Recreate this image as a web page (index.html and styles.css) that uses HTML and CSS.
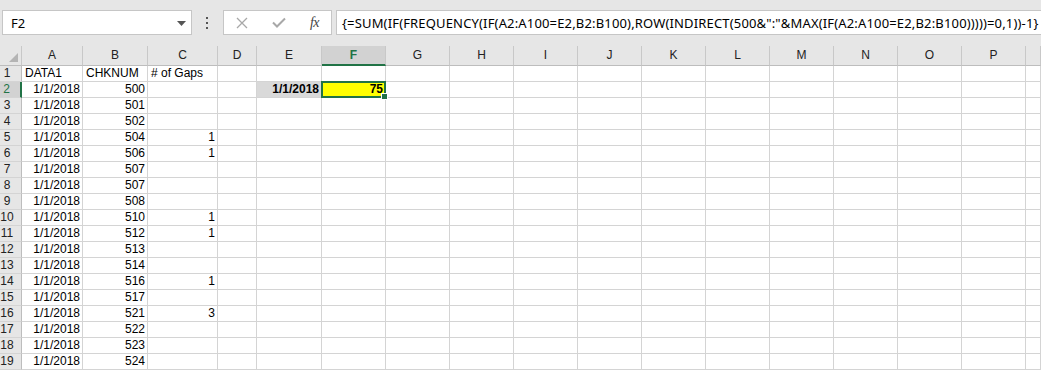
FILE: index.html
```html
<!DOCTYPE html>
<html>
<head>
<meta charset="utf-8">
<link rel="stylesheet" href="styles.css">
</head>
<body>
<div class="toolbar">
  <div class="namebox"><span>F2</span><svg class="caret" width="9" height="5" viewBox="0 0 9 5"><polygon points="0,0 9,0 4.5,5" fill="#555"/></svg></div>
  <div class="dots"><svg width="3" height="12" viewBox="0 0 3 12"><rect x="0" y="0" width="2" height="2" fill="#555"/><rect x="0" y="5" width="2" height="2" fill="#555"/><rect x="0" y="10" width="2" height="2" fill="#555"/></svg></div>
  <div class="fbtns">
    <svg width="12" height="12" viewBox="0 0 12 12"><path d="M1 1 L11 11 M11 1 L1 11" stroke="#a8a8a8" stroke-width="1.3" fill="none"/></svg>
    <svg width="14" height="11" viewBox="0 0 14 11"><path d="M1 5.5 L5 9.5 L13 1.5" stroke="#a8a8a8" stroke-width="2" fill="none"/></svg>
    <span class="fx">fx</span>
  </div>
  <div class="finput">{=SUM(IF(FREQUENCY(IF(A2:A100=E2,B2:B100),ROW(INDIRECT(500&amp;":"&amp;MAX(IF(A2:A100=E2,B2:B100)))))=0,1))-1}</div>
</div>
<div class="sheet">
  <span class="ch corner"><svg width="9" height="9" viewBox="0 0 9 9"><polygon points="9,0 9,9 0,9" fill="#b4b4b4"/></svg></span><span class="ch">A</span><span class="ch">B</span><span class="ch">C</span><span class="ch">D</span><span class="ch">E</span><span class="ch sel">F</span><span class="ch">G</span><span class="ch">H</span><span class="ch">I</span><span class="ch">J</span><span class="ch">K</span><span class="ch">L</span><span class="ch">M</span><span class="ch">N</span><span class="ch">O</span><span class="ch">P</span><span class="ch"></span>

  <span class="rh">1</span><span class="c">DATA1</span><span class="c">CHKNUM</span><span class="c"># of Gaps</span><span class="c"></span><span class="c"></span><span class="c"></span><span class="c"></span><span class="c"></span><span class="c"></span><span class="c"></span><span class="c"></span><span class="c"></span><span class="c"></span><span class="c"></span><span class="c"></span><span class="c"></span><span class="c"></span>

  <span class="rh sel">2</span><span class="c n">1/1/2018</span><span class="c n">500</span><span class="c"></span><span class="c"></span><span class="c n b grayfill">1/1/2018</span><span class="c n b yellow active">75</span><span class="c"></span><span class="c"></span><span class="c"></span><span class="c"></span><span class="c"></span><span class="c"></span><span class="c"></span><span class="c"></span><span class="c"></span><span class="c"></span><span class="c"></span>

  <span class="rh">3</span><span class="c n">1/1/2018</span><span class="c n">501</span><span class="c"></span><span class="c"></span><span class="c"></span><span class="c"></span><span class="c"></span><span class="c"></span><span class="c"></span><span class="c"></span><span class="c"></span><span class="c"></span><span class="c"></span><span class="c"></span><span class="c"></span><span class="c"></span><span class="c"></span>

  <span class="rh">4</span><span class="c n">1/1/2018</span><span class="c n">502</span><span class="c"></span><span class="c"></span><span class="c"></span><span class="c"></span><span class="c"></span><span class="c"></span><span class="c"></span><span class="c"></span><span class="c"></span><span class="c"></span><span class="c"></span><span class="c"></span><span class="c"></span><span class="c"></span><span class="c"></span>

  <span class="rh">5</span><span class="c n">1/1/2018</span><span class="c n">504</span><span class="c n">1</span><span class="c"></span><span class="c"></span><span class="c"></span><span class="c"></span><span class="c"></span><span class="c"></span><span class="c"></span><span class="c"></span><span class="c"></span><span class="c"></span><span class="c"></span><span class="c"></span><span class="c"></span><span class="c"></span>

  <span class="rh">6</span><span class="c n">1/1/2018</span><span class="c n">506</span><span class="c n">1</span><span class="c"></span><span class="c"></span><span class="c"></span><span class="c"></span><span class="c"></span><span class="c"></span><span class="c"></span><span class="c"></span><span class="c"></span><span class="c"></span><span class="c"></span><span class="c"></span><span class="c"></span><span class="c"></span>

  <span class="rh">7</span><span class="c n">1/1/2018</span><span class="c n">507</span><span class="c"></span><span class="c"></span><span class="c"></span><span class="c"></span><span class="c"></span><span class="c"></span><span class="c"></span><span class="c"></span><span class="c"></span><span class="c"></span><span class="c"></span><span class="c"></span><span class="c"></span><span class="c"></span><span class="c"></span>

  <span class="rh">8</span><span class="c n">1/1/2018</span><span class="c n">507</span><span class="c"></span><span class="c"></span><span class="c"></span><span class="c"></span><span class="c"></span><span class="c"></span><span class="c"></span><span class="c"></span><span class="c"></span><span class="c"></span><span class="c"></span><span class="c"></span><span class="c"></span><span class="c"></span><span class="c"></span>

  <span class="rh">9</span><span class="c n">1/1/2018</span><span class="c n">508</span><span class="c"></span><span class="c"></span><span class="c"></span><span class="c"></span><span class="c"></span><span class="c"></span><span class="c"></span><span class="c"></span><span class="c"></span><span class="c"></span><span class="c"></span><span class="c"></span><span class="c"></span><span class="c"></span><span class="c"></span>

  <span class="rh">10</span><span class="c n">1/1/2018</span><span class="c n">510</span><span class="c n">1</span><span class="c"></span><span class="c"></span><span class="c"></span><span class="c"></span><span class="c"></span><span class="c"></span><span class="c"></span><span class="c"></span><span class="c"></span><span class="c"></span><span class="c"></span><span class="c"></span><span class="c"></span><span class="c"></span>

  <span class="rh">11</span><span class="c n">1/1/2018</span><span class="c n">512</span><span class="c n">1</span><span class="c"></span><span class="c"></span><span class="c"></span><span class="c"></span><span class="c"></span><span class="c"></span><span class="c"></span><span class="c"></span><span class="c"></span><span class="c"></span><span class="c"></span><span class="c"></span><span class="c"></span><span class="c"></span>

  <span class="rh">12</span><span class="c n">1/1/2018</span><span class="c n">513</span><span class="c"></span><span class="c"></span><span class="c"></span><span class="c"></span><span class="c"></span><span class="c"></span><span class="c"></span><span class="c"></span><span class="c"></span><span class="c"></span><span class="c"></span><span class="c"></span><span class="c"></span><span class="c"></span><span class="c"></span>

  <span class="rh">13</span><span class="c n">1/1/2018</span><span class="c n">514</span><span class="c"></span><span class="c"></span><span class="c"></span><span class="c"></span><span class="c"></span><span class="c"></span><span class="c"></span><span class="c"></span><span class="c"></span><span class="c"></span><span class="c"></span><span class="c"></span><span class="c"></span><span class="c"></span><span class="c"></span>

  <span class="rh">14</span><span class="c n">1/1/2018</span><span class="c n">516</span><span class="c n">1</span><span class="c"></span><span class="c"></span><span class="c"></span><span class="c"></span><span class="c"></span><span class="c"></span><span class="c"></span><span class="c"></span><span class="c"></span><span class="c"></span><span class="c"></span><span class="c"></span><span class="c"></span><span class="c"></span>

  <span class="rh">15</span><span class="c n">1/1/2018</span><span class="c n">517</span><span class="c"></span><span class="c"></span><span class="c"></span><span class="c"></span><span class="c"></span><span class="c"></span><span class="c"></span><span class="c"></span><span class="c"></span><span class="c"></span><span class="c"></span><span class="c"></span><span class="c"></span><span class="c"></span><span class="c"></span>

  <span class="rh">16</span><span class="c n">1/1/2018</span><span class="c n">521</span><span class="c n">3</span><span class="c"></span><span class="c"></span><span class="c"></span><span class="c"></span><span class="c"></span><span class="c"></span><span class="c"></span><span class="c"></span><span class="c"></span><span class="c"></span><span class="c"></span><span class="c"></span><span class="c"></span><span class="c"></span>

  <span class="rh">17</span><span class="c n">1/1/2018</span><span class="c n">522</span><span class="c"></span><span class="c"></span><span class="c"></span><span class="c"></span><span class="c"></span><span class="c"></span><span class="c"></span><span class="c"></span><span class="c"></span><span class="c"></span><span class="c"></span><span class="c"></span><span class="c"></span><span class="c"></span><span class="c"></span>

  <span class="rh">18</span><span class="c n">1/1/2018</span><span class="c n">523</span><span class="c"></span><span class="c"></span><span class="c"></span><span class="c"></span><span class="c"></span><span class="c"></span><span class="c"></span><span class="c"></span><span class="c"></span><span class="c"></span><span class="c"></span><span class="c"></span><span class="c"></span><span class="c"></span><span class="c"></span>

  <span class="rh">19</span><span class="c n">1/1/2018</span><span class="c n">524</span><span class="c"></span><span class="c"></span><span class="c"></span><span class="c"></span><span class="c"></span><span class="c"></span><span class="c"></span><span class="c"></span><span class="c"></span><span class="c"></span><span class="c"></span><span class="c"></span><span class="c"></span><span class="c"></span><span class="c"></span>
</div>
</body>
</html>
```
FILE: styles.css
```css
* { box-sizing: border-box; margin: 0; padding: 0; }
html, body { width: 1041px; height: 370px; overflow: hidden; }
body { background: #e6e6e6; font-family: "Liberation Sans", Arial, sans-serif; color: #000; }

.toolbar { height: 46px; display: flex; align-items: flex-start; padding: 10px 0 0 2px; }
.namebox { width: 190px; height: 25px; background: #fff; border: 1px solid #c6c6c6; display: flex; align-items: center; justify-content: space-between; padding: 0 5px 0 8px; font: 13px "Noto Sans", "Open Sans", sans-serif; }
.caret { margin-top: 1px; }
.dots { width: 31px; height: 25px; display: flex; align-items: center; justify-content: center; }
.fbtns { width: 109px; height: 25px; background: #fff; border: 1px solid #c6c6c6; display: flex; align-items: center; justify-content: space-between; padding: 0 12px 0 12px; }
.fx { font: italic 14px "Liberation Serif", serif; color: #444; letter-spacing: -0.5px; }
.finput { flex: 1; margin-left: 4px; height: 25px; background: #fff; border: 1px solid #c6c6c6; border-right: none; padding: 2px 0 0 5px; font: 13px "Noto Sans", "Open Sans", sans-serif; letter-spacing: 0.16px; white-space: nowrap; overflow: hidden; line-height: 20px; }

.sheet { display: grid; grid-template-columns: 22px 61px 65px 70px 39px 65px 64px repeat(10, 64px) 1fr; grid-template-rows: 20px repeat(19, 16px); background: #fff; }
.sheet span { white-space: nowrap; overflow: hidden; font-size: 12px; }

.ch { background: #e6e6e6; border-right: 1px solid #c8c8c8; border-bottom: 1px solid #bdbdbd; text-align: center; line-height: 19px; color: #222; }
.ch.corner { display: flex; align-items: flex-end; justify-content: flex-end; padding: 0 3px 3px 0; }
.ch.sel { background: #d2d2d2; color: #217346; font-weight: bold; border-bottom: 2px solid #217346; line-height: 18px; }

.rh { background: #e6e6e6; border-right: 1px solid #bdbdbd; border-bottom: 1px solid #d4d4d4; text-align: center; padding-right: 7px; line-height: 15px; color: #222; }
.rh.sel { background: #d2d2d2; color: #217346; border-right: 2px solid #217346; }

.c { border-right: 1px solid #d4d4d4; border-bottom: 1px solid #d4d4d4; line-height: 15px; padding: 0 3px; }
.c.n { text-align: right; padding-right: 2px; }
.c.b { font-weight: bold; }
.grayfill { background: #d9d9d9; }
.yellow { background: #ffff00; }
.sheet span.active { position: relative; overflow: visible; }
.active::after { content: ""; position: absolute; left: -1px; top: -1px; right: -1px; bottom: -1px; border: 2px solid #217346; }
.active::before { content: ""; position: absolute; right: -3px; bottom: -3px; width: 5px; height: 5px; background: #217346; border: 1px solid #fff; z-index: 1; }
```
